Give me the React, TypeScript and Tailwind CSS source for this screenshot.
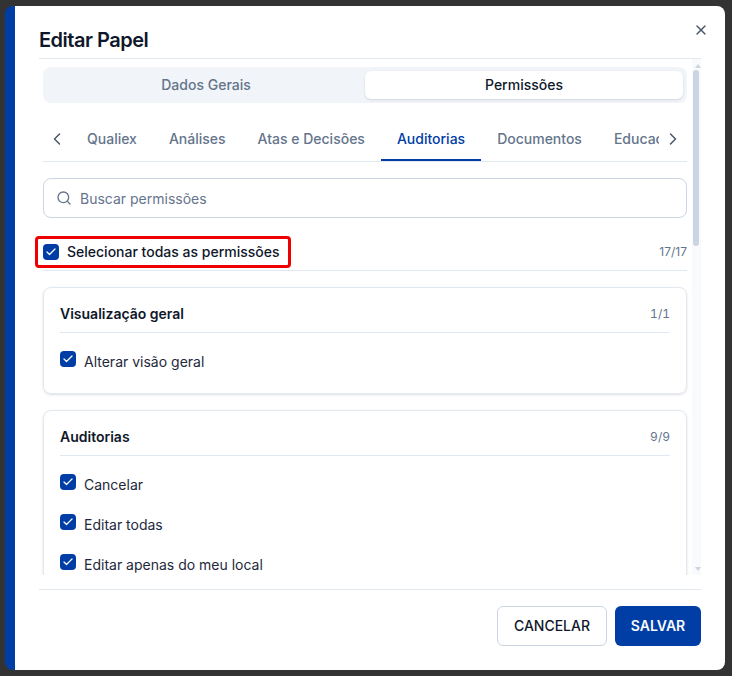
import React from "react";
import { Check, ChevronLeft, ChevronRight, Search, X } from "lucide-react";

const tabs = ["Qualiex", "Análises", "Atas e Decisões", "Auditorias", "Documentos", "Educação"];

const Box = () => (
  <span className="flex h-4 w-4 shrink-0 items-center justify-center rounded-[4px] bg-[#003da5]">
    <Check size={12} strokeWidth={2.5} className="text-white" />
  </span>
);

const Row = ({ label }: { label: string }) => (
  <div className="flex h-5 items-start gap-2">
    <Box />
    <span className="mt-px text-sm leading-5 text-[#1e293b]">{label}</span>
  </div>
);

const Card = ({ title, count, items }: { title: string; count: string; items: string[] }) => (
  <div className="mb-4 rounded-lg border border-[#e2e8f0] px-4 pb-[22px] shadow-sm">
    <div className="flex h-[45px] items-center justify-between border-b border-[#e2e8f0] pt-2">
      <span className="text-sm leading-5 font-semibold text-[#0f172a]">{title}</span>
      <span className="text-xs tabular-nums text-[#64748b]">{count}</span>
    </div>
    <div className="flex flex-col gap-5 pt-[18px]">
      {items.map((item) => (
        <Row key={item} label={item} />
      ))}
    </div>
  </div>
);

export default function App() {
  return (
    <div className="h-[676px] w-[732px] overflow-hidden bg-[#333333] pt-[6px] pl-[5px] font-['Inter',sans-serif]">
      <div className="relative h-[664px] w-[720px] rounded-lg border-l-[10px] border-[#003da5] bg-white pr-6 pl-6">
        {/* Cabeçalho */}
        <div className="border-b border-[#e2e8f0] pt-5 pb-1">
          <h2 className="text-xl leading-7 font-semibold tracking-tight text-[#0f172a]">Editar Papel</h2>
        </div>
        <button className="absolute top-[16px] right-[16px] text-[#475569]">
          <X size={16} />
        </button>

        {/* Conteúdo */}
        <div className="flex h-[516px] overflow-y-clip">
          <div className="w-[653px] shrink-0 pr-[5px] pl-1">
            <div className="mt-2 grid h-9 grid-cols-2 rounded-lg bg-[#f1f5f9] p-1">
              <div className="flex items-center justify-center text-sm font-medium text-[#64748b]">Dados Gerais</div>
              <div className="flex items-center justify-center rounded-md bg-white text-sm font-medium text-[#0f172a] shadow-sm">Permissões</div>
            </div>

            <div className="mt-4 flex h-[43px] items-start border-b border-[#e2e8f0]">
              <div className="flex h-10 w-7 shrink-0 items-center justify-center text-[#475569]">
                <ChevronLeft size={20} strokeWidth={1.75} />
              </div>
              <div className="flex h-[42px] flex-1 overflow-hidden">
                {tabs.map((tab) => (
                  <div
                    key={tab}
                    className={
                      tab === "Auditorias"
                        ? "flex h-[42px] shrink-0 items-center border-b-2 border-[#003da5] px-4 text-sm font-medium text-[#003da5]"
                        : "flex h-[42px] shrink-0 items-center border-b-2 border-transparent px-4 text-sm font-medium text-[#64748b]"
                    }
                  >
                    {tab}
                  </div>
                ))}
              </div>
              <div className="flex h-10 w-7 shrink-0 items-center justify-center text-[#475569]">
                <ChevronRight size={20} strokeWidth={1.75} />
              </div>
            </div>

            <div className="mt-4 flex h-10 items-center gap-2 rounded-lg border border-[#cbd5e1] pl-3">
              <Search size={16} className="text-[#64748b]" />
              <span className="pt-0.5 text-sm text-[#64748b]">Buscar permissões</span>
            </div>

            <div className="mt-[18px] flex h-[35px] items-start justify-between border-b border-[#e2e8f0] pb-[2px]">
              <div className="-ml-2 flex h-8 w-[256px] items-center gap-2 rounded-[4px] border-[3px] border-[#ee0000] pl-[5px]">
                <Box />
                <span className="text-sm leading-5 font-medium whitespace-nowrap text-[#0f172a]">Selecionar todas as permissões</span>
              </div>
              <span className="self-center text-xs text-[#64748b]">17/17</span>
            </div>

            <div className="mt-4">
              <Card title="Visualização geral" count="1/1" items={["Alterar visão geral"]} />
              <Card title="Auditorias" count="9/9" items={["Cancelar", "Editar todas", "Editar apenas do meu local"]} />
            </div>
          </div>

          {/* Barra de rolagem */}
          <div className="flex flex-1 flex-col bg-[#f8fafc] pl-px">
            <div className="mt-[5px] ml-[2px] h-0 w-0 border-x-[3px] border-b-[4px] border-x-transparent border-b-[#cbd5e1]" />
            <div className="mt-[2px] h-[176px] w-[6px] rounded-[3px] bg-[#cbd5e1]" />
            <div className="mt-auto mb-[4px] ml-[2px] h-0 w-0 border-x-[3px] border-t-[4px] border-x-transparent border-t-[#cbd5e1]" />
          </div>
        </div>

        {/* Rodapé */}
        <div className="mt-[14px] flex justify-end gap-2 border-t border-[#e2e8f0] pt-4">
          <button className="h-10 w-[110px] rounded-md border border-[#cbd5e1] bg-white text-sm font-medium text-[#0f172a]">CANCELAR</button>
          <button className="h-10 w-[86px] rounded-md bg-[#003da5] text-sm font-semibold text-[#f8fafc]">SALVAR</button>
        </div>
      </div>
    </div>
  );
}
